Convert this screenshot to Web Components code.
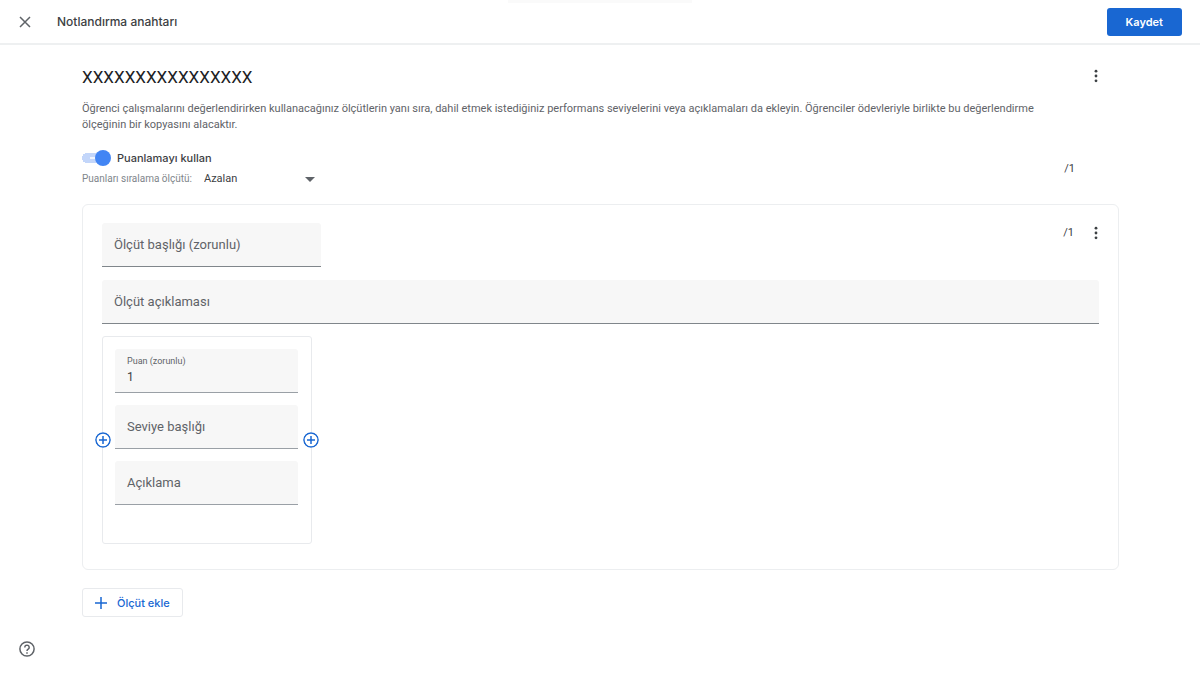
<!DOCTYPE html>
<html lang="tr">
<head>
<meta charset="utf-8">
<title>Notlandırma anahtarı</title>
<style>
body { margin: 0; background: #fff; color: #3c4043; font-family: Roboto, sans-serif; font-size: 11px; line-height: 16px; }
</style>
</head>
<body>
<rubric-page></rubric-page>
<script>
const define = (name, html, setup) => {
  const template = document.createElement('template');
  template.innerHTML = html;
  customElements.define(name, class extends HTMLElement {
    constructor() {
      super();
      this.attachShadow({ mode: 'open' }).append(template.content.cloneNode(true));
    }
    connectedCallback() { if (setup) setup(this, this.shadowRoot); }
  });
};

define('icon-button', `
<style>
:host { display: block; flex: none; color: #5f6368; }
button { display: flex; align-items: center; justify-content: center; width: 24px; height: 24px; padding: 0; border: 0; border-radius: 50%; background: none; color: inherit; cursor: pointer; }
</style>
<button type="button"><slot></slot></button>`, (host, root) => {
  root.querySelector('button').setAttribute('aria-label', host.getAttribute('label'));
});

define('more-button', `
<style>
:host { display: block; flex: none; color: #3c4043; }
icon-button { color: inherit; }
svg { display: block; }
</style>
<icon-button label="Diğer seçenekler">
  <svg width="18" height="18" viewBox="0 0 18 18" fill="currentColor"><circle cx="9" cy="4.200" r="1.400"/><circle cx="9" cy="9" r="1.400"/><circle cx="9" cy="13.800" r="1.400"/></svg>
</icon-button>`);

define('app-bar', `
<style>
:host { display: block; }
header { position: relative; display: flex; align-items: center; justify-content: space-between; height: 43px; padding: 0 18px 0 13px; border-bottom: 2px solid #eef0f1; }
header::before { content: ""; position: absolute; top: 0; left: 50%; width: 184px; height: 3px; margin-left: -92px; background: #fafafa; }
.left { display: flex; align-items: center; gap: 20px; }
h1 { margin: 0; font: 500 12px/16px Inter, sans-serif; color: #3c4043; }
button { height: 28px; padding: 0 19px; border: 0; border-radius: 3px; background: #1967d2; color: #fff; font: 600 11px/16px Inter, sans-serif; cursor: pointer; }
svg { display: block; }
</style>
<header>
  <div class="left">
    <icon-button label="Kapat"><svg width="12" height="12" viewBox="0 0 12 12" fill="none" stroke="currentColor" stroke-width="1.5"><path d="M1 1l10 10M11 1L1 11"/></svg></icon-button>
    <h1>Notlandırma anahtarı</h1>
  </div>
  <button type="button">Kaydet</button>
</header>`);

define('text-field', `
<style>
:host { display: block; }
.box { display: grid; box-sizing: border-box; height: 44px; background: #f7f7f7; border-bottom: 1px solid var(--line, #80868b); border-radius: 3px 3px 0 0; }
label, input { grid-area: 1 / 1; padding: 0 12px; }
label { align-self: center; font-size: 13px; line-height: 16px; color: #5f6368; pointer-events: none; z-index: 1; }
input { width: 100%; min-width: 0; box-sizing: border-box; border: 0; background: none; outline: 0; font: 12px/16px Roboto, sans-serif; color: #3c4043; }
:host([value]) label { align-self: start; padding-top: 4px; font-size: 9px; }
:host([value]) input { padding-top: 12px; }
</style>
<div class="box"><label for="field"></label><input id="field" type="text"></div>`, (host, root) => {
  root.querySelector('label').textContent = host.getAttribute('label');
  root.querySelector('input').value = host.getAttribute('value') || '';
});

define('score-options', `
<style>
:host { display: block; }
.row { display: flex; align-items: center; justify-content: space-between; padding-right: 44px; }
.toggle { display: flex; align-items: center; gap: 6px; height: 20px; font: 500 11px/16px Inter, sans-serif; color: #3c4043; }
input { appearance: none; display: flex; align-items: center; justify-content: flex-end; width: 29px; height: 16px; margin: 0; background: linear-gradient(#f0f5ff, #f0f5ff) 8px 7px / 8px 2px no-repeat, linear-gradient(#c3d6fa, #c3d6fa) 4px 3px / 20px 10px no-repeat, radial-gradient(circle, #c3d6fa 5px, transparent 5px) 0 3px / 10px 10px no-repeat; }
input::before { content: ""; width: 16px; height: 16px; border-radius: 50%; background: #4285f4; }
.sort { display: flex; align-items: center; gap: 12px; height: 22px; }
.sort label { font-size: 10px; color: #80868b; }
.select { display: grid; align-items: center; width: 111px; }
select, svg { grid-area: 1 / 1; }
select { appearance: none; width: 100%; padding: 0; border: 0; background: none; font: 11px/16px Roboto, sans-serif; color: #3c4043; }
svg { justify-self: end; pointer-events: none; }
</style>
<div class="row">
  <div>
    <label class="toggle"><input type="checkbox" role="switch" checked>Puanlamayı kullan</label>
    <div class="sort">
      <label for="order">Puanları sıralama ölçütü:</label>
      <div class="select">
        <select id="order"><option>Azalan</option><option>Artan</option></select>
        <svg width="10" height="5" viewBox="0 0 10 5" fill="#5f6368"><path d="M0 0h10L5 5z"/></svg>
      </div>
    </div>
  </div>
  <span>/1</span>
</div>`);

define('level-card', `
<style>
:host { display: block; position: relative; width: 210px; box-sizing: border-box; padding: 12px 13px 38px 12px; border: 1px solid #e8eaed; border-radius: 3px; --line: #9aa0a6; }
.fields { display: grid; gap: 12px; }
.add { position: absolute; top: 50%; margin-top: -12px; color: #1967d2; }
.before { left: -12px; }
.after { right: -12px; }
svg { display: block; background: #fff; border-radius: 50%; }
</style>
<div class="fields">
  <text-field label="Puan (zorunlu)" value="1"></text-field>
  <text-field label="Seviye başlığı"></text-field>
  <text-field label="Açıklama"></text-field>
</div>
<icon-button class="add before" label="Öncesine seviye ekle"><svg width="16" height="16" viewBox="0 0 16 16" fill="none" stroke="currentColor" stroke-width="1.5"><circle cx="8" cy="8" r="7.1"/><path d="M8 4v8M4 8h8"/></svg></icon-button>
<icon-button class="add after" label="Sonrasına seviye ekle"><svg width="16" height="16" viewBox="0 0 16 16" fill="none" stroke="currentColor" stroke-width="1.5"><circle cx="8" cy="8" r="7.1"/><path d="M8 4v8M4 8h8"/></svg></icon-button>`);

define('criterion-card', `
<style>
:host { display: block; padding: 18px 19px 25px; border: 1px solid #eceef0; border-radius: 6px; }
.top { display: flex; align-items: flex-start; justify-content: space-between; margin-bottom: 13px; }
.title { width: 219px; }
.tools { display: flex; align-items: center; gap: 10px; margin-right: -9px; margin-top: -2px; }
level-card { margin-top: 12px; }
</style>
<div class="top">
  <text-field class="title" label="Ölçüt başlığı (zorunlu)"></text-field>
  <div class="tools"><span>/1</span><more-button></more-button></div>
</div>
<text-field label="Ölçüt açıklaması"></text-field>
<level-card></level-card>`);

define('rubric-page', `
<style>
:host { display: block; }
main { padding: 19px 81px 0 82px; }
.head { display: flex; align-items: flex-start; justify-content: space-between; padding-right: 11px; }
h2 { margin: 0; font: 400 17px/26px Roboto, sans-serif; color: #202124; }
p { margin: 11px 0 15px; padding-right: 48px; color: #5f6368; }
criterion-card { margin: 14px 0 18px; }
.add { display: flex; align-items: center; gap: 10px; height: 29px; padding: 0 12px; border: 1px solid #e8eaed; border-radius: 3px; background: #fff; color: #1967d2; font: 500 11px/16px Inter, sans-serif; cursor: pointer; }
footer { padding: 20px 15px 14px; }
svg { display: block; }
</style>
<app-bar></app-bar>
<main>
  <div class="head"><h2>XXXXXXXXXXXXXXXX</h2><more-button></more-button></div>
  <p>Öğrenci çalışmalarını değerlendirirken kullanacağınız ölçütlerin yanı sıra, dahil etmek istediğiniz performans seviyelerini veya açıklamaları da ekleyin. Öğrenciler ödevleriyle birlikte bu değerlendirme ölçeğinin bir kopyasını alacaktır.</p>
  <score-options></score-options>
  <criterion-card></criterion-card>
  <button class="add" type="button"><svg width="12" height="12" viewBox="0 0 12 12" fill="none" stroke="currentColor" stroke-width="1.5"><path d="M6 0v12M0 6h12"/></svg>Ölçüt ekle</button>
</main>
<footer><icon-button label="Yardım"><svg width="16" height="16" viewBox="0 0 16 16" fill="none" stroke="currentColor" stroke-width="1.5"><circle cx="8" cy="8" r="7.1"/><path d="M5.8 6.4a2.2 2.2 0 1 1 3.4 1.8C8.400 8.700 8 9.100 8 10"/><path d="M8 11.200v1.500"/></svg></icon-button></footer>`);
</script>
</body>
</html>
